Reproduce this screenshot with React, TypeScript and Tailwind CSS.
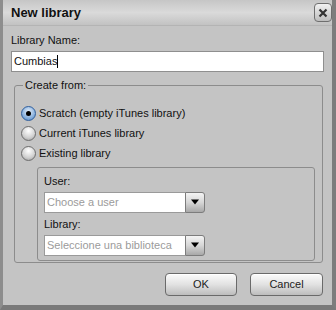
import React from 'react';

const font = { fontFamily: '"Liberation Sans", Arial, sans-serif' };

function Radio({ checked, label }: { checked?: boolean; label: string }) {
  return (
    <div className="flex items-center h-[20px]">
      {checked ? (
        <span className="w-[15px] h-[15px] rounded-full border border-[#2f5f9e] bg-[radial-gradient(circle_at_50%_35%,#e6f0fb,#7aa6d8_70%,#4a7cbc)] flex items-center justify-center">
          <span className="w-[5px] h-[5px] rounded-full bg-black" />
        </span>
      ) : (
        <span className="w-[15px] h-[15px] rounded-full border border-[#6e6e6e] bg-[radial-gradient(circle_at_50%_30%,#ffffff,#d0d0d0_60%,#9a9a9a)]" />
      )}
      <span className="ml-[3px] text-[11px] text-[#111]">{label}</span>
    </div>
  );
}

function Combo({ placeholder }: { placeholder: string }) {
  return (
    <div className="flex h-[21px] w-[161px]">
      <div className="flex-1 bg-white border border-[#9a9a9a] border-r-0 flex items-center pl-[2px] text-[11px] text-[#9b9b9b]">
        {placeholder}
      </div>
      <div className="w-[20px] rounded-r-[3px] border border-[#7c7c7c] bg-gradient-to-b from-[#f4f4f4] via-[#d6d6d6] to-[#a8a8a8] flex items-center justify-center">
        <svg width="8" height="6" viewBox="0 0 8 6">
          <path d="M0 0.5 L8 0.5 L4 5.5 Z" fill="#000" />
        </svg>
      </div>
    </div>
  );
}

function Button({ label, w }: { label: string; w: string }) {
  return (
    <button
      className={`${w} h-[23px] rounded-[4px] border border-[#6a6a6a] bg-gradient-to-b from-[#fbfbfb] via-[#e2e2e2] to-[#bdbdbd] text-[11px] text-[#222] shadow-[inset_0_1px_0_#fff]`}
    >
      {label}
    </button>
  );
}

export default function App() {
  return (
    <div
      style={font}
      className="w-[336px] h-[310px] flex flex-col bg-[#c4c4c4] border-l-[3px] border-r-[4px] border-b-[5px] border-l-[#8d8d8d] border-r-[#7d7d7d] border-b-[#7a7a7a]"
    >
      {/* Title bar */}
      <div className="h-[26px] flex items-center justify-between pl-[8px] pr-[0px] bg-gradient-to-b from-[#c6c6c6] via-[#dadada] to-[#c2c2c2] border-b border-[#b4b4b4]">
        <span className="text-[13px] font-bold text-[#111] mt-[1px]">New library</span>
        <div className="w-[18px] h-[19px] rounded-[4px] border border-[#6f6f6f] bg-gradient-to-b from-[#f2f2f2] to-[#bdbdbd] flex items-center justify-center">
          <svg width="10" height="10" viewBox="0 0 10 10">
            <path d="M1.5 1.5 L8.5 8.5 M8.5 1.5 L1.5 8.5" stroke="#333" strokeWidth="2.2" />
          </svg>
        </div>
      </div>

      {/* Body */}
      <div className="flex-1 flex flex-col pl-[8px] pr-[8px] pt-[7px]">
        <div className="text-[11px] text-[#111] h-[14px] leading-[14px]">Library Name:</div>
        <div className="mt-[4px] h-[21px] bg-white border border-[#8f8f8f] flex items-center pl-[2px] text-[11px] text-[#111]">
          Cumbias<span className="inline-block w-px h-[13px] bg-black" />
        </div>

        <fieldset className="ml-[3px] mr-[1px] mt-[5px] border border-[#8c8c8c] rounded-[3px] pl-[6px] pr-[7px] pb-[7px] h-[186px] flex flex-col">
          <legend className="ml-[2px] px-[2px] text-[11px] text-[#111]">Create from:</legend>
          <div className="mt-[10px] flex flex-col">
            <Radio checked label="Scratch (empty iTunes library)" />
            <Radio label="Current iTunes library" />
            <Radio label="Existing library" />
          </div>
          <div className="ml-[16px] mt-[3px] border border-[#8c8c8c] rounded-[3px] pl-[6px] pt-[6px] pb-[4px] flex flex-col">
            <div className="text-[11px] text-[#111] h-[15px] leading-[15px]">User:</div>
            <div className="mt-[3px]">
              <Combo placeholder="Choose a user" />
            </div>
            <div className="text-[11px] text-[#111] h-[15px] leading-[15px] mt-[4px]">Library:</div>
            <div className="mt-[3px]">
              <Combo placeholder="Seleccione una biblioteca" />
            </div>
          </div>
        </fieldset>

        <div className="flex justify-end gap-[13px] mt-[10px] pr-[1px]">
          <Button label="OK" w="w-[72px]" />
          <Button label="Cancel" w="w-[73px]" />
        </div>
      </div>
    </div>
  );
}
